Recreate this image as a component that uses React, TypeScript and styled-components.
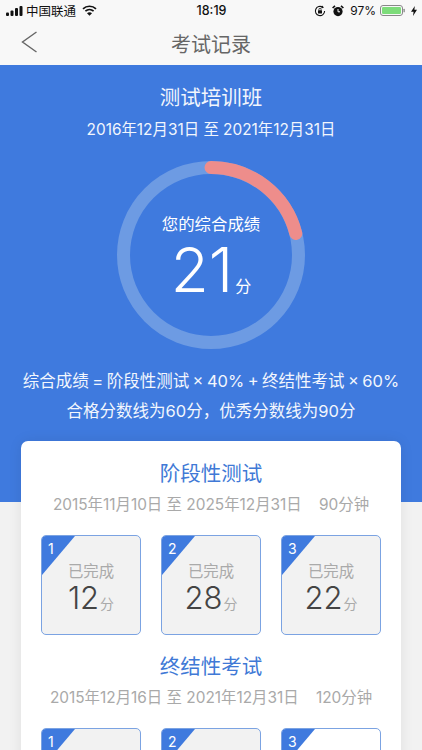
import styled, { createGlobalStyle } from "styled-components";

const Reset = createGlobalStyle`
  html, body { margin: 0; padding: 0; }
  body {
    width: 422px;
    height: 750px;
    overflow: hidden;
    background: #f2f2f2;
    font-family: Inter, "Noto Sans CJK SC", sans-serif;
  }
`;

const Page = styled.div`
  width: 422px;
  height: 750px;
  overflow: hidden;
`;

const StatusBar = styled.div`
  height: 21px;
  background: #f8f8f8;
  display: grid;
  grid-template-columns: 1fr auto 1fr;
  align-items: center;
  padding: 0 5px 0 6px;
  color: #111;
  font-size: 12px;
`;

const StatusLeft = styled.div`
  display: flex;
  align-items: center;
  gap: 3px;
  font-size: 12.5px;
`;

const StatusRight = styled.div`
  display: flex;
  align-items: center;
  justify-content: flex-end;
  gap: 6px;
`;

const Clock = styled.span`
  font-weight: 500;
  font-size: 12.5px;
`;

const Percent = styled.span`
  font-size: 12px;
  margin-right: -2px;
`;

const NavBar = styled.div`
  height: 44px;
  background: #f8f8f8;
  display: flex;
  align-items: center;
  justify-content: center;
  color: #666;
  font-size: 20px;
  position: relative;
`;

const BackButton = styled.svg`
  position: absolute;
  left: 21px;
  top: 10px;
`;

const Hero = styled.section`
  height: 437px;
  background: #3f7ade;
  color: #fff;
  display: flex;
  flex-direction: column;
  align-items: center;
`;

const HeroTitle = styled.h1`
  margin: 20px 0 0;
  font-size: 20.5px;
  line-height: 26px;
  font-weight: 400;
  color: #f2f6fd;
`;

const HeroDates = styled.div`
  margin-top: 9px;
  font-size: 15.4px;
  line-height: 20px;
  color: #f2f6fd;
  white-space: nowrap;
`;

const Ring = styled.div`
  margin-top: 21px;
  width: 188px;
  height: 188px;
  display: grid;
  place-items: center;
  & > * {
    grid-area: 1 / 1;
  }
`;

const RingText = styled.div`
  display: flex;
  flex-direction: column;
  align-items: center;
  padding-top: 3px;
`;

const RingLabel = styled.div`
  font-size: 16.4px;
  line-height: 22px;
`;

const RingScore = styled.div`
  display: flex;
  align-items: baseline;
  margin-top: 5px;
  line-height: 60px;
  font-size: 62px;
  font-weight: 300;
`;

const RingUnit = styled.span`
  font-size: 16px;
  line-height: 1;
  font-weight: 400;
  margin-left: 2px;
`;

const Formula = styled.div`
  margin-top: 17px;
  font-size: 16.5px;
  line-height: 30px;
  word-spacing: -1.2px;
  text-align: center;
  color: #f2f6fd;
  white-space: nowrap;
`;

const Card = styled.section`
  margin: -61px 21px 0;
  height: 400px;
  background: #fff;
  border-radius: 7px;
  box-shadow: 0 0 14px rgba(0, 0, 0, 0.08);
  padding-top: 20px;
  display: flex;
  flex-direction: column;
  align-items: center;
`;

const SectionTitle = styled.h2`
  margin: 0;
  font-size: 20.5px;
  line-height: 26px;
  font-weight: 400;
  color: #4079d6;
`;

const SectionMeta = styled.div`
  margin-top: 8px;
  font-size: 15.4px;
  line-height: 20px;
  color: #a9a9a9;
  white-space: pre;
`;

const Tiles = styled.div`
  display: flex;
  gap: 20px;
  margin-top: 20px;
  margin-bottom: 19px;
`;

const Tile = styled.div<{ $blank?: boolean }>`
  width: 100px;
  height: 100px;
  box-sizing: border-box;
  flex: none;
  position: relative;
  overflow: hidden;
  border: 1px solid #7ba3e2;
  border-radius: 5px;
  background: ${(p) => (p.$blank ? "#fff" : "#f2f2f2")};
  display: flex;
  flex-direction: column;
  align-items: center;
  padding-top: 26px;
`;

const Corner = styled.div`
  position: absolute;
  left: 0;
  top: 0;
  width: 33px;
  height: 39px;
  background: #3f7ade;
  clip-path: polygon(0 0, 100% 0, 0 100%);
`;

const CornerNumber = styled.span`
  position: absolute;
  left: 6px;
  top: 3px;
  color: #fff;
  font-size: 14px;
  line-height: 20px;
`;

const TileStatus = styled.div`
  font-size: 15.4px;
  line-height: 20px;
  color: #aaa;
`;

const TileScore = styled.div`
  display: flex;
  align-items: baseline;
  font-size: 31px;
  font-weight: 300;
  line-height: 34px;
  color: #444;
  margin-top: -1px;
`;

const TileUnit = styled.span`
  font-size: 14px;
  line-height: 1;
  font-weight: 400;
  color: #aaa;
  margin-left: 1px;
`;

const first = [
  { no: 1, score: 12 },
  { no: 2, score: 28 },
  { no: 3, score: 22 },
];

const radius = 87.5;
const circumference = 2 * Math.PI * radius;

const App = () => {
  return (
    <Page>
      <Reset />
      <StatusBar>
        <StatusLeft>
          <svg width="17" height="10" viewBox="0 0 17 10">
            <rect x="0" y="6.5" width="3" height="3.5" rx="1" fill="#111" />
            <rect x="4.5" y="4.5" width="3" height="5.5" rx="1" fill="#111" />
            <rect x="9" y="2" width="3" height="8" rx="1" fill="#111" />
            <rect x="13.5" y="0" width="3" height="10" rx="1" fill="#111" />
          </svg>
          <span>中国联通</span>
          <svg width="15" height="11" viewBox="0 0 15 11" style={{ marginLeft: 3 }}>
            <path d="M1 3.8 C4.6 .4 10.4 .4 14 3.8" fill="none" stroke="#111" strokeWidth="1.7" />
            <path d="M3.4 6.2 C5.7 4.2 9.3 4.2 11.6 6.2" fill="none" stroke="#111" strokeWidth="1.7" />
            <path d="M7.5 10.8 L5 8.2 C6.4 7 8.6 7 10 8.2 Z" fill="#111" />
          </svg>
        </StatusLeft>
        <Clock>18:19</Clock>
        <StatusRight>
          <svg width="12" height="12" viewBox="0 0 12 12">
            <path d="M10.6 6 A4.6 4.6 0 1 1 8.6 2.2" fill="none" stroke="#111" strokeWidth="1.1" />
            <path d="M8 .6 L10 2.6 L7.4 3.4 Z" fill="#111" />
            <rect x="4" y="5.2" width="4" height="3.2" rx=".5" fill="#111" />
            <path d="M4.9 5.4 V4.4 A1.1 1.1 0 0 1 7.1 4.4 V5.4" fill="none" stroke="#111" strokeWidth=".8" />
          </svg>
          <svg width="12" height="12" viewBox="0 0 12 12">
            <circle cx="6" cy="6.6" r="4.6" fill="#111" />
            <path d="M6 4 V6.8 H8" fill="none" stroke="#fff" strokeWidth="1" />
            <path d="M0.6 3 L3 .8 M11.4 3 L9 .8" stroke="#111" strokeWidth="1.6" />
          </svg>
          <Percent>97%</Percent>
          <svg width="25" height="11" viewBox="0 0 25 11">
            <rect x=".5" y=".5" width="22" height="10" rx="2.5" fill="none" stroke="#888" />
            <rect x="2" y="2" width="19" height="7" rx="1.2" fill="#7ddc7a" />
            <rect x="23.5" y="3.7" width="1.3" height="3.6" rx=".6" fill="#888" />
          </svg>
          <svg width="6" height="10" viewBox="0 0 6 10">
            <path d="M3.8 0 L0 5.8 H2.6 L2 10 L6 3.8 H3.4 Z" fill="#111" />
          </svg>
        </StatusRight>
      </StatusBar>
      <NavBar>
        <BackButton width="17" height="22" viewBox="0 0 17 22">
          <path d="M15.5 1 L1.5 11 L15.5 21" fill="none" stroke="#666" strokeWidth="1.4" />
        </BackButton>
        考试记录
      </NavBar>
      <Hero>
        <HeroTitle>测试培训班</HeroTitle>
        <HeroDates>2016年12月31日 至 2021年12月31日</HeroDates>
        <Ring>
          <svg width="188" height="188" viewBox="0 0 188 188">
            <circle cx="94" cy="94" r={radius} fill="none" stroke="#6d9be3" strokeWidth="13" />
            <circle
              cx="94"
              cy="94"
              r={radius}
              fill="none"
              stroke="#ee8d8b"
              strokeWidth="13"
              strokeLinecap="round"
              strokeDasharray={`${circumference * 0.21} ${circumference}`}
              transform="rotate(-90 94 94)"
            />
          </svg>
          <RingText>
            <RingLabel>您的综合成绩</RingLabel>
            <RingScore>
              21<RingUnit>分</RingUnit>
            </RingScore>
          </RingText>
        </Ring>
        <Formula>
          综合成绩 = 阶段性测试 × 40% + 终结性考试 × 60%
          <br />
          合格分数线为60分，优秀分数线为90分
        </Formula>
      </Hero>
      <Card>
        <SectionTitle>阶段性测试</SectionTitle>
        <SectionMeta>2015年11月10日 至 2025年12月31日    90分钟</SectionMeta>
        <Tiles>
          {first.map((t) => (
            <Tile key={t.no}>
              <Corner />
              <CornerNumber>{t.no}</CornerNumber>
              <TileStatus>已完成</TileStatus>
              <TileScore>
                {t.score}
                <TileUnit>分</TileUnit>
              </TileScore>
            </Tile>
          ))}
        </Tiles>
        <SectionTitle>终结性考试</SectionTitle>
        <SectionMeta>2015年12月16日 至 2021年12月31日    120分钟</SectionMeta>
        <Tiles>
          <Tile>
            <Corner />
            <CornerNumber>1</CornerNumber>
          </Tile>
          <Tile>
            <Corner />
            <CornerNumber>2</CornerNumber>
          </Tile>
          <Tile $blank>
            <Corner />
            <CornerNumber>3</CornerNumber>
          </Tile>
        </Tiles>
      </Card>
    </Page>
  );
};

export default App;
